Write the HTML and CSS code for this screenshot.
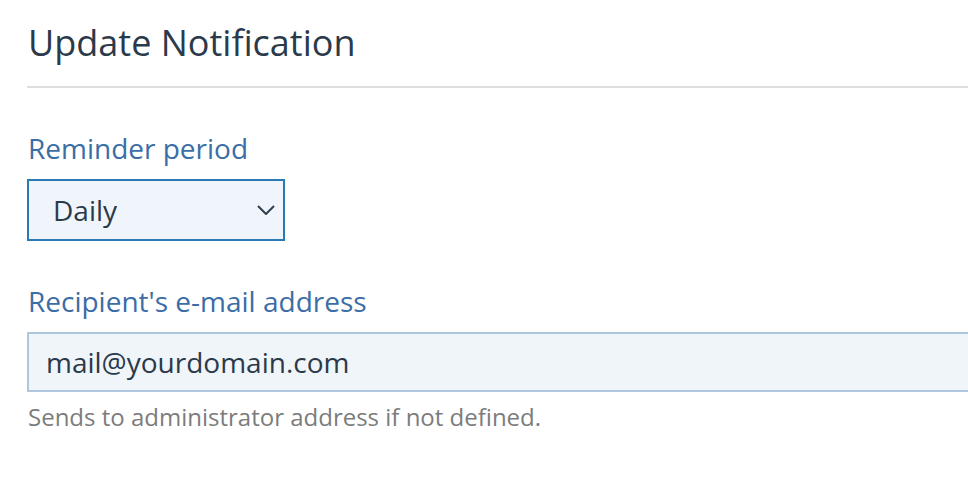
FILE: index.html
```html
<!DOCTYPE html>
<html>
<head>
<meta charset="utf-8">
<link rel="stylesheet" href="styles.css">
</head>
<body>
<div class="page">
  <h1 class="title">Update Notification</h1>
  <div class="field">
    <label class="label" for="period">Reminder period</label>
    <div class="select">
      <span class="select-value">Daily</span>
      <svg class="chevron" width="18" height="10" viewBox="0 0 18 10"><path d="M1 1 L9 9 L17 1" fill="none" stroke="#2d3e50" stroke-width="2"/></svg>
    </div>
  </div>
  <div class="field">
    <label class="label" for="mail">Recipient's e-mail address</label>
    <div class="input">mail@yourdomain.com</div>
    <div class="help">Sends to administrator address if not defined.</div>
  </div>
</div>
</body>
</html>
```
FILE: styles.css
```css
html, body {
  margin: 0;
  padding: 0;
  background: #fff;
}
body {
  font-family: "Open Sans", "Noto Sans", sans-serif;
  color: #2b3a4a;
  overflow: hidden;
}
.page {
  padding-left: 27px;
}
.title {
  margin: 0;
  padding: 18px 0 18px 1px;
  font-size: 36px;
  font-weight: 400;
  line-height: 50px;
  color: #2b3a4a;
  border-bottom: 2px solid #dedede;
}
.field {
  margin-top: 42px;
}
.label {
  display: block;
  padding-left: 1px;
  font-size: 28px;
  line-height: 36px;
  color: #3b6da6;
  margin-bottom: 13px;
}
.select {
  height: 58px;
  width: 222px;
  border: 2px solid #2a7ab5;
  background: #eff5fa;
  display: flex;
  align-items: center;
  justify-content: space-between;
  padding: 0 8px 0 24px;
}
.select-value {
  font-size: 28px;
  line-height: 36px;
  color: #2b3a4a;
}
.chevron {
  display: block;
}
.input {
  height: 56px;
  border: 2px solid #aec7df;
  border-right: none;
  background: #f0f5fa;
  display: flex;
  align-items: center;
  padding-left: 17px;
  font-size: 28px;
  line-height: 36px;
  color: #2b3a4a;
}
.help {
  margin-top: 9px;
  padding-left: 1px;
  font-size: 24px;
  line-height: 32px;
  color: #7c7c7c;
}
```
